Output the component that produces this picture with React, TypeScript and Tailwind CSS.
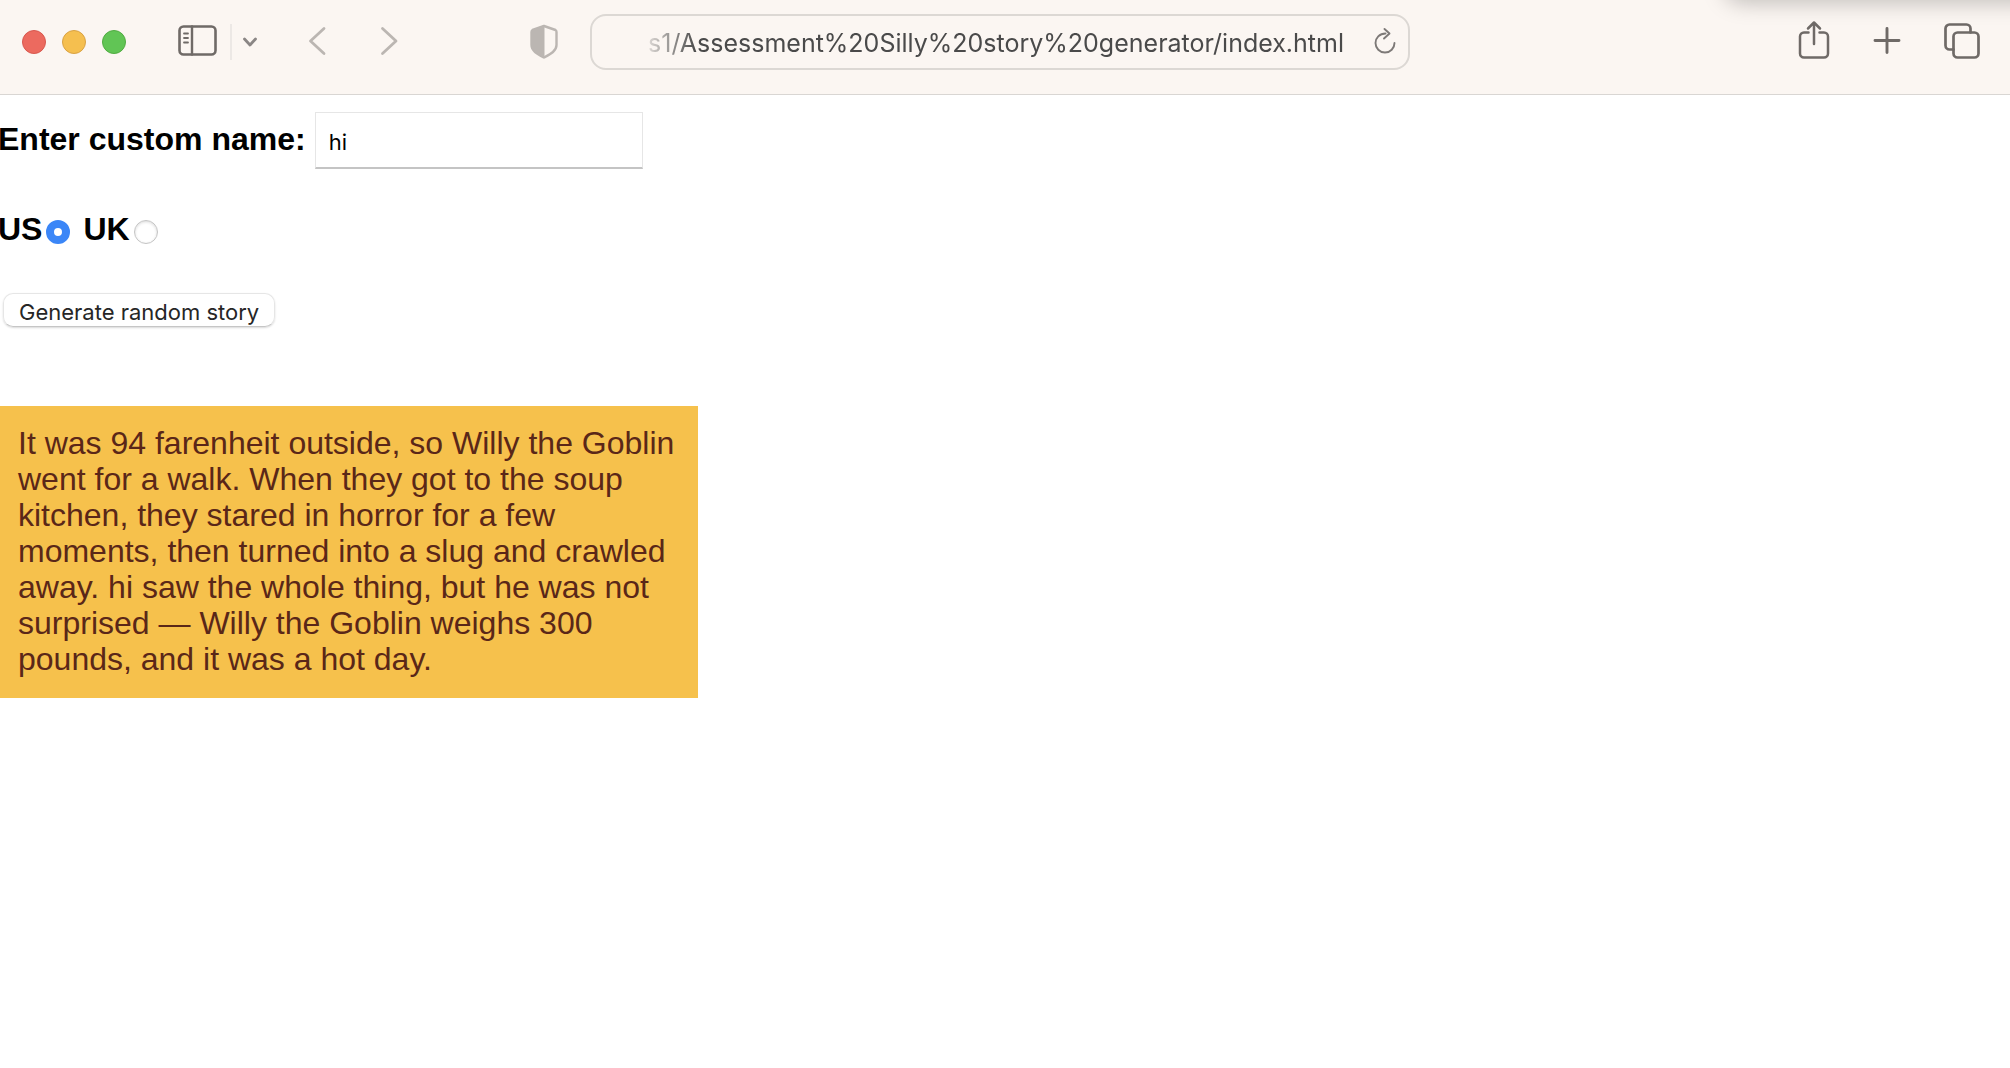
import { useState } from "react";

const icon = { fill: "none", strokeLinecap: "round", strokeLinejoin: "round" } as const;

function Toolbar() {
  return (
    <header className="relative flex h-[95px] items-start overflow-hidden border-b border-[#d9d6d3] bg-[#fbf6f2] font-[Inter,sans-serif] text-[#6f6a67]">
      <div className="absolute -top-5 right-[-40px] h-5 w-[324px] rounded-b-2xl shadow-[0_0_22px_2px_rgba(0,0,0,0.25)]" />
      <div className="flex w-full items-center pr-[10px] pt-[14px]">
        <div className="flex flex-1 items-center">
          <div className="ml-[22px] flex shrink-0 gap-4">
            <button aria-label="Close" className="size-6 rounded-full border border-[#d8584f] bg-[#ec6a5f]" />
            <button aria-label="Minimize" className="size-6 rounded-full border border-[#d9a244] bg-[#f5bf4f]" />
            <button aria-label="Full screen" className="size-6 rounded-full border border-[#51ac42] bg-[#61c555]" />
          </div>
          <button aria-label="Sidebar" className="ml-[52px] shrink-0">
            <svg width="39" height="56" viewBox="0 0 39 56" {...icon} stroke="currentColor" className="block">
              <rect x="1.5" y="12.5" width="36" height="28" rx="4" strokeWidth="2.6" />
              <path d="M14 12.5v28" strokeWidth="2.4" />
              <path d="M6 19.5h4M6 24h4M6 28.5h4" strokeWidth="1.8" />
            </svg>
          </button>
          <div className="ml-[13px] h-9 w-[2px] shrink-0 bg-[#ece8e5]" />
          <button aria-label="Tab groups" className="ml-[10px] shrink-0 text-[#8a8685]">
            <svg width="16" height="56" viewBox="0 0 16 56" {...icon} stroke="currentColor" className="block">
              <path d="M2.5 25l5.5 6 5.5-6" strokeWidth="2.8" />
            </svg>
          </button>
          <button aria-label="Back" className="ml-[50px] shrink-0 text-[#bbb6b2]">
            <svg width="18" height="56" viewBox="0 0 18 56" {...icon} stroke="currentColor" className="block">
              <path d="M16 14.5L2.5 27 16 39.5" strokeWidth="2.8" />
            </svg>
          </button>
          <button aria-label="Forward" className="ml-[54px] shrink-0 text-[#bbb6b2]">
            <svg width="18" height="56" viewBox="0 0 18 56" {...icon} stroke="currentColor" className="block">
              <path d="M2.5 14.5L16 27 2.5 39.5" strokeWidth="2.8" />
            </svg>
          </button>
          <button aria-label="Privacy report" className="ml-auto mr-8 shrink-0 text-[#bbb6b2]">
            <svg width="28" height="56" viewBox="0 0 28 56" {...icon} stroke="currentColor" className="block">
              <path d="M14 12l11.5 4Q26.5 16.5 26.5 18V31C26.5 37 20.5 40 14 43.5 7.5 40 1.5 37 1.5 31V18Q1.5 16.5 2.5 16z" strokeWidth="2.4" />
              <path d="M14 12v31.5C7.5 40 1.5 37 1.5 31V17z" fill="currentColor" />
            </svg>
          </button>
        </div>
        <div className="flex h-14 w-[820px] items-center rounded-2xl border-2 border-[#dcd8d4]">
          <input
            aria-label="Address"
            readOnly
            value="s1/Assessment%20Silly%20story%20generator/index.html"
            className="min-w-0 flex-1 bg-transparent pl-5 pt-px text-right text-[25px] text-[#4a4a4a] outline-none [mask-image:linear-gradient(to_right,transparent_46px,black_104px)]"
          />
          <button aria-label="Reload" className="ml-[29px] mr-[11px] shrink-0 text-[#7d7977]">
            <svg width="24" height="30" viewBox="0 0 24 30" {...icon} stroke="currentColor" className="block">
              <path d="M12.5 6.5C6.5 6.5 2.5 11 2.5 16a9.5 9.5 0 0 0 19 0" strokeWidth="1.9" />
              <path d="M11.5 2l5 4.5-5.500 5" strokeWidth="1.9" />
            </svg>
          </button>
        </div>
        <div className="flex flex-1 justify-end gap-[42px]">
          <button aria-label="Share" className="shrink-0">
            <svg width="32" height="56" viewBox="0 0 32 56" {...icon} stroke="currentColor" className="block">
              <path d="M10.5 18.5H6a4 4 0 0 0-4 4v17a4 4 0 0 0 4 4h20a4 4 0 0 0 4-4v-17a4 4 0 0 0-4-4h-4.500M16 30V9M10 14.500L16 8.500l6 6" strokeWidth="2.5" />
            </svg>
          </button>
          <button aria-label="New tab" className="shrink-0">
            <svg width="30" height="56" viewBox="0 0 30 56" {...icon} stroke="currentColor" className="block">
              <path d="M15 14.5v24M3 26.5h24" strokeWidth="2.9" />
            </svg>
          </button>
          <button aria-label="Tab overview" className="mr-5 shrink-0">
            <svg width="36" height="56" viewBox="0 0 36 56" {...icon} stroke="currentColor" className="block">
              <rect x="9.5" y="18.5" width="25" height="25" rx="4" strokeWidth="2.7" />
              <path d="M9.5 35.5H5.5a4 4 0 0 1-4-4v-17a4 4 0 0 1 4-4h17a4 4 0 0 1 4 4v4" strokeWidth="2.7" />
            </svg>
          </button>
        </div>
      </div>
    </header>
  );
}

const radio =
  "ml-1 mt-[6px] size-6 appearance-none rounded-full border border-[#c4c4c4] bg-white shadow-[inset_0_1px_3px_rgba(0,0,0,0.15)] checked:border-[8px] checked:border-[#3b86f7] checked:shadow-none";

export default function App() {
  const [name, setName] = useState("hi");
  const [region, setRegion] = useState("us");
  return (
    <div className="min-h-screen bg-white font-['Liberation_Sans',Arial,sans-serif] text-[32px] leading-9 text-black">
      <Toolbar />
      <main className="pt-[17px]">
        <div className="flex items-center">
          <label htmlFor="name" className="-ml-[2px] pb-1 font-bold">Enter custom name:</label>
          <input
            id="name"
            value={name}
            onChange={(e) => setName(e.target.value)}
            className="ml-[9px] h-[57px] w-[328px] border border-b-2 border-[#e6e6e6] border-b-[#c4c4c4] px-[13px] pt-1 font-[Inter,sans-serif] text-[22px] outline-none"
          />
        </div>
        <div className="-ml-[2px] mt-[42px] flex items-center font-bold">
          <label htmlFor="us">US</label>
          <input id="us" type="radio" name="region" checked={region === "us"} onChange={() => setRegion("us")} className={radio} />
          <label htmlFor="uk" className="ml-[13px]">UK</label>
          <input id="uk" type="radio" name="region" checked={region === "uk"} onChange={() => setRegion("uk")} className={radio} />
        </div>
        <button className="ml-[3px] mt-[46px] block h-[34px] rounded-[10px] border border-[#e6e6e6] border-b-[#c6c6c6] px-[15px] pt-[2px] font-[Inter,sans-serif] text-[22px] leading-8 text-[#262626] shadow-[0_1px_2px_rgba(0,0,0,0.15)]">
          Generate random story
        </button>
        <p className="mt-[79px] max-w-[698px] bg-[#f6c14c] pb-[21px] pl-[18px] pr-5 pt-[19px] text-[#5a2718]">
          It was 94 farenheit outside, so Willy the Goblin went for a walk. When they got to the soup kitchen, they
          stared in horror for a few moments, then turned into a slug and crawled away. hi saw the whole thing, but he
          was not surprised — Willy the Goblin weighs 300 pounds, and it was a hot day.
        </p>
      </main>
    </div>
  );
}
